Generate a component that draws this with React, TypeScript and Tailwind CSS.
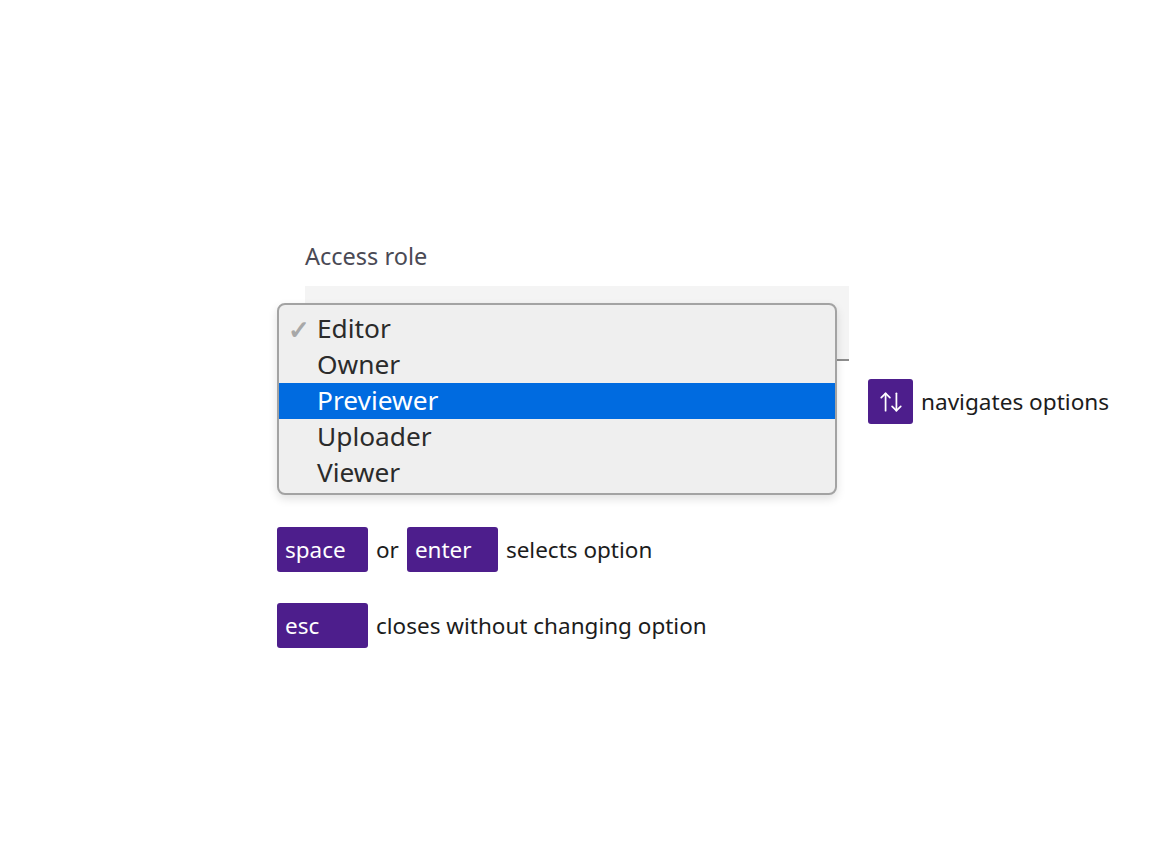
import { ArrowUpDown } from "lucide-react";

const options = ["Editor", "Owner", "Previewer", "Uploader", "Viewer"];

function Key({ label }: { label: string }) {
  return (
    <span className="flex h-[45px] w-[91px] items-center rounded-[3px] bg-[#4d1e8c] pl-[8px] text-[22.5px] text-white">
      {label}
    </span>
  );
}

export default function App() {
  return (
    <div
      className="min-h-[864px] w-full bg-white pl-[277px] pt-[242px] text-[#1c1c1c]"
      style={{ fontFamily: '"Noto Sans", "Open Sans", sans-serif' }}
    >
      <div className="flex items-start">
        <div className="ml-[28px] w-[544px]">
          <div className="mb-[16px] h-[28px] text-[23.5px] leading-[28px] text-[#4a4a55]">Access role</div>
          <div className="relative h-[75px] border-b-2 border-[#8d8d8d] bg-[#f4f4f4]">
            <div className="absolute left-[-28px] top-[17px] z-10 w-[560px] rounded-[8px] border-2 border-[#a3a3a3] bg-[#efefef] pb-[2px] pt-[6px] shadow-[0_4px_10px_rgba(0,0,0,0.12)]">
              {options.map((opt) => (
                <div
                  key={opt}
                  className={
                    opt === "Previewer"
                      ? "flex h-[36px] items-center bg-[#006be0] text-[26.3px] text-white"
                      : "flex h-[36px] items-center text-[26.3px] text-[#2b2b2b]"
                  }
                >
                  <span className="w-[38px] pl-[9px] text-[26px] font-bold text-[#a8a8a8]">
                    {opt === "Editor" ? "✓" : ""}
                  </span>
                  <span>{opt}</span>
                </div>
              ))}
            </div>
          </div>
        </div>
        <div className="ml-[19px] mt-[137px] flex items-center gap-[8px]">
          <span className="flex h-[45px] w-[45px] items-center justify-center rounded-[3px] bg-[#4d1e8c] text-white">
            <ArrowUpDown size={26} strokeWidth={1.6} />
          </span>
          <span className="text-[22.6px]">navigates options</span>
        </div>
      </div>

      <div className="mt-[103px] flex items-center gap-[8px] text-[22.5px]">
        <Key label="space" />
        <span>or</span>
        <Key label="enter" />
        <span>selects option</span>
      </div>

      <div className="mt-[31px] flex items-center gap-[8px] text-[22.5px]">
        <Key label="esc" />
        <span>closes without changing option</span>
      </div>
    </div>
  );
}
